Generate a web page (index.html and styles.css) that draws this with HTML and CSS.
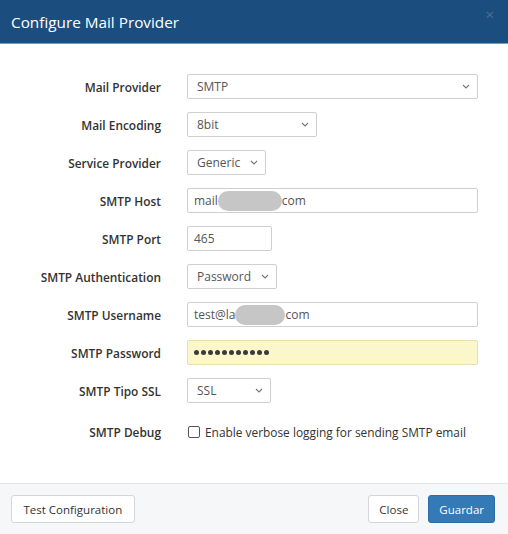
FILE: index.html
```html
<!DOCTYPE html>
<html>
<head>
<meta charset="utf-8">
<link rel="stylesheet" href="styles.css">
</head>
<body>
<div class="modal">
  <div class="modal-header">
    <h4 class="modal-title">Configure Mail Provider</h4>
    <span class="close">×</span>
  </div>
  <div class="modal-body">
    <div class="form-grid">
      <label class="lbl">Mail Provider</label>
      <div class="ctl"><span class="sel w-full"><select class="field"><option>SMTP</option></select><svg class="chev" viewBox="0 0 8 5"><path d="M1 1l3 3 3-3"/></svg></span></div>

      <label class="lbl">Mail Encoding</label>
      <div class="ctl"><span class="sel w-enc"><select class="field"><option>8bit</option></select><svg class="chev" viewBox="0 0 8 5"><path d="M1 1l3 3 3-3"/></svg></span></div>

      <label class="lbl">Service Provider</label>
      <div class="ctl"><span class="sel w-svc"><select class="field"><option>Generic</option></select><svg class="chev" viewBox="0 0 8 5"><path d="M1 1l3 3 3-3"/></svg></span></div>

      <label class="lbl">SMTP Host</label>
      <div class="ctl"><div class="field text w-full">mail<span class="blur b-host"></span>com</div></div>

      <label class="lbl">SMTP Port</label>
      <div class="ctl"><div class="field text w-port">465</div></div>

      <label class="lbl">SMTP Authentication</label>
      <div class="ctl"><span class="sel w-auth"><select class="field"><option>Password</option></select><svg class="chev" viewBox="0 0 8 5"><path d="M1 1l3 3 3-3"/></svg></span></div>

      <label class="lbl">SMTP Username</label>
      <div class="ctl"><div class="field text w-full">test@la<span class="blur b-user"></span>com</div></div>

      <label class="lbl">SMTP Password</label>
      <div class="ctl"><div class="field text w-full pw"><i></i><i></i><i></i><i></i><i></i><i></i><i></i><i></i><i></i><i></i><i></i></div></div>

      <label class="lbl">SMTP Tipo SSL</label>
      <div class="ctl"><span class="sel w-ssl"><select class="field"><option>SSL</option></select><svg class="chev" viewBox="0 0 8 5"><path d="M1 1l3 3 3-3"/></svg></span></div>

      <label class="lbl dbg">SMTP Debug</label>
      <div class="ctl dbg"><span class="check"></span><span class="check-text">Enable verbose logging for sending SMTP email</span></div>
    </div>
  </div>
  <div class="modal-footer">
    <button class="btn btn-test">Test Configuration</button>
    <div class="right">
      <button class="btn">Close</button>
      <button class="btn primary">Guardar</button>
    </div>
  </div>
</div>
</body>
</html>
```

FILE: styles.css
```css
* { box-sizing: border-box; }
html, body { margin: 0; padding: 0; background: #fff; }
body { font-family: "Open Sans", "Liberation Sans", sans-serif; color: #333; }
.modal { width: 508px; height: 534px; display: flex; flex-direction: column; }
.modal-header {
  height: 44px; background: #1b4e7f; border-bottom: 1px solid #6f9cc6;
  display: flex; align-items: center; justify-content: space-between;
  padding: 0 14px 0 11px;
}
.modal-title { margin: 0; color: #fff; font-weight: 400; font-size: 15.3px; line-height: 20px; }
.close { color: #4d7097; font-size: 15px; line-height: 1; margin-top: -14px; }
.modal-body { flex: 1; padding: 30px 30px 0 0; }
.form-grid {
  display: grid; grid-template-columns: 161px 291px; column-gap: 26px; row-gap: 13px;
  align-items: center;
}
.lbl { text-align: right; font-weight: 600; font-size: 11.9px; color: #333; }
.ctl { display: flex; align-items: center; height: 25px; }
.field {
  height: 25px; border: 1px solid #cfcfcf; border-radius: 2px; background: #fff;
  font-family: "Open Sans", "Liberation Sans", sans-serif; font-size: 12px; color: #555;
  padding: 0 6px; margin: 0;
}
.sel { position: relative; display: block; height: 25px; }
.sel select.field {
  width: 100%; -webkit-appearance: none; appearance: none; padding: 0 20px 0 9px; outline: none;
}
.chev {
  position: absolute; right: 8px; top: 10px; width: 8px; height: 5px;
  fill: none; stroke: #777; stroke-width: 1.1; pointer-events: none;
}
.text { display: flex; align-items: center; }
.w-full { width: 291px; }
.w-enc { width: 130px; }
.w-svc { width: 79px; }
.w-port { width: 85px; }
.w-auth { width: 90px; }
.w-ssl { width: 84px; }
.blur { display: inline-block; height: 20px; background: #c6c6c6; border-radius: 10px; }
.b-host { width: 64px; }
.b-user { width: 50px; }
.pw { background: #fcf6cb; border-color: #e9dfae; gap: 2px; }
.pw i { display: block; width: 5px; height: 5px; border-radius: 50%; background: #3a3a3a; }
.dbg { margin-top: 3px; }
.check { width: 12px; height: 12px; border: 1px solid #555; border-radius: 2px; margin-left: 1px; }
.check-text { margin-left: 5px; font-size: 11.9px; color: #333; }
.modal-footer {
  height: 51px; border-top: 1px solid #e2e4e7; background: #f6f7f9;
  display: flex; justify-content: space-between; align-items: center; padding: 0 13px 0 11px;
}
.right { display: flex; gap: 9px; }
.btn {
  height: 28px; padding: 0 10px; border: 1px solid #d6d6d6; border-radius: 3px; background: #fff;
  font-family: "Open Sans", "Liberation Sans", sans-serif; font-size: 11.5px; color: #333;
}
.btn-test { padding: 0 11.5px; }
.btn.primary { background: #337ab7; border-color: #2e6da4; color: #fff; }
```
